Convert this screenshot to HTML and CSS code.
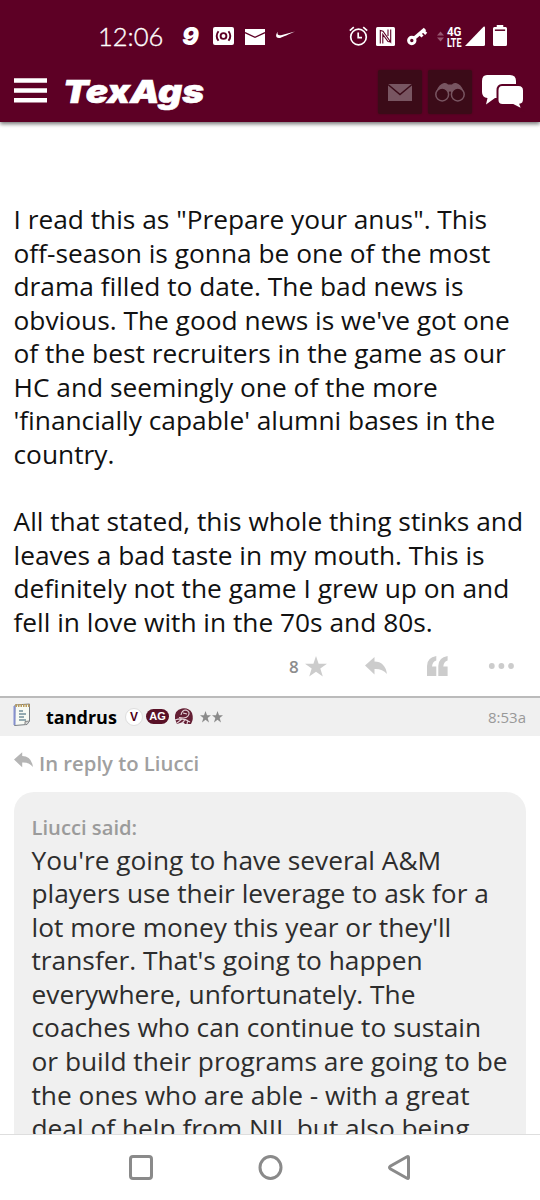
FILE: index.html
```html
<!DOCTYPE html>
<html lang="en">
<head>
<meta charset="utf-8">
<title>TexAgs</title>
<link rel="stylesheet" href="styles.css">
</head>
<body>
<div class="screen">
  <header class="top">
    <div class="status">
      <span class="clock">12:06</span>
      <span class="nine">9</span>
      <svg class="ic-cam" width="21" height="18" viewBox="0 0 21 18"><rect width="21" height="18" rx="2" fill="#fff"/><g fill="none" stroke="#5d0025" stroke-width="1.9"><circle cx="10.500" cy="9" r="2.900"/><path d="M5.500 4.200Q1.900 9 5.500 13.800M15.500 4.200Q19.100 9 15.500 13.800"/></g></svg>
      <svg class="ic-mail" width="20" height="17" viewBox="0 0 20 17"><path d="M0 1H20V17H0Z" fill="#fff"/><path d="M0 4.600L10 9.300L20 4.600" fill="none" stroke="#5d0025" stroke-width="1.400"/></svg>
      <svg class="ic-swoosh" width="20" height="9" viewBox="0 0 20 9"><path d="M1.600 .8C-.6 4-.6 7.400 3.600 7Q5 6.900 19 .5L5 4.200C2.500 4.800 1 3.600 1.600 .8Z" fill="#fff"/></svg>
      <span class="grow"></span>
      <svg class="ic-alarm" width="19" height="20" viewBox="0 0 19 20"><g fill="none" stroke="#fff" stroke-width="1.700"><circle cx="9.500" cy="11" r="7.800"/><path d="M.8 4.600L4.800 1.200M18.200 4.600L14.200 1.200M9.200 6.500V11.700H13"/></g></svg>
      <svg class="ic-nfc" width="19" height="19" viewBox="0 0 19 19"><rect width="19" height="19" rx="1.500" fill="#fff"/><path d="M4.300 16.500V3.500L7 4.200L14.700 15V2.500M14.700 15L12 14.500L6.800 7.500V16.500M12 2.500V9" fill="none" stroke="#5d0025" stroke-width="1.100"/></svg>
      <svg class="ic-key" width="20" height="19" viewBox="0 0 20 19"><g fill="none" stroke="#fff"><circle cx="4.800" cy="13.500" r="3.200" stroke-width="3"/><path d="M7.500 11L18 2" stroke-width="3.600"/><path d="M12.500 6.500L15.500 9.500M15.700 3.500L19.200 6.800" stroke-width="3"/></g></svg>
      <svg class="ic-arrows" width="7" height="11" viewBox="0 0 7 11"><path d="M0 4.500L3.500 .5L7 4.500ZM0 6.500H7L3.500 10.500Z" fill="#965670"/></svg>
      <svg class="lte" width="15" height="21" viewBox="0 0 15 21"><text x="0" y="9.200" textLength="14.500" lengthAdjust="spacingAndGlyphs">4G</text><text x="0" y="20.200" textLength="14.500" lengthAdjust="spacingAndGlyphs">LTE</text></svg>
      <svg class="ic-signal" width="20" height="20" viewBox="0 0 20 20"><path d="M0 20L18.500 .7Q20 0 20 1.500V18.500Q20 20 18.500 20Z" fill="#fff"/></svg>
      <svg class="ic-batt" width="14" height="21" viewBox="0 0 15 21" preserveAspectRatio="none"><path d="M4 0H11V2H13.500Q15 2 15 3.500V19.500Q15 21 13.500 21H1.500Q0 21 0 19.500V3.500Q0 2 1.500 2H4Z" fill="#fff"/><path d="M2 5.200H13" stroke="#5d0025" stroke-width="1.500"/></svg>
    </div>
    <div class="nav">
      <svg class="menu" width="33" height="25" viewBox="0 0 33 25"><path d="M0 2.500H33M0 12.500H33M0 22.300H33" stroke="#fff" stroke-width="4.400"/></svg>
      <svg class="brand" width="144" height="38" viewBox="0 0 144 38"><text x="-1" y="30" textLength="141" lengthAdjust="spacingAndGlyphs">TexAgs</text></svg>
      <span class="grow"></span>
      <span class="tile"><svg width="24" height="17" viewBox="0 0 24 17"><rect width="24" height="17" fill="#785561"/><path d="M0 .5L12 10.500L24 .5" fill="none" stroke="#3b0b18" stroke-width="1.500"/></svg></span>
      <span class="tile"><svg width="30" height="19" viewBox="0 0 30 19"><path d="M1.500 8Q4 1 9 0Q12 -.5 13 1.500H17Q18 -.5 21 0Q26 1 28.500 8L20 14L15 8L10 14Z" fill="#785561"/><g fill="#3b0b18" stroke="#785561" stroke-width="1.500"><circle cx="7.200" cy="11.500" r="6.400"/><circle cx="22.800" cy="11.500" r="6.400"/></g></svg></span>
      <svg class="chat" width="44" height="36" viewBox="0 0 44 36"><path d="M6 1H29Q35 1 35 7V18Q35 24 29 24H14L5 30.500L6.500 24Q1 23.500 1 18V7Q1 1 6 1Z" fill="#fff"/><path d="M21 11H37.500Q43 11 43 16.500V25Q43 30 39.500 30.500L41.500 36L32 31H21.500Q16.500 31 16.500 26V16.500Q16.500 11 21 11Z" fill="#fff" stroke="#5d0025" stroke-width="2"/></svg>
    </div>
  </header>
  <main class="feed">
    <article class="post">I read this as "Prepare your anus". This<br>off-season is gonna be one of the most<br>drama filled to date. The bad news is<br>obvious. The good news is we've got one<br>of the best recruiters in the game as our<br>HC and seemingly one of the more<br>'financially capable' alumni bases in the<br>country.<br><br>All that stated, this whole thing stinks and<br>leaves a bad taste in my mouth. This is<br>definitely not the game I grew up on and<br>fell in love with in the 70s and 80s.</article>
    <div class="actions">
      <span class="count">8</span>
      <svg class="a-star" width="22" height="21" viewBox="0 0 22 21"><path d="M11 0L13.600 7.700H22L15.300 12.500L17.800 20.500L11 15.700L4.200 20.500L6.700 12.500L0 7.700H8.400Z"/></svg>
      <svg class="a-reply" width="22" height="18" viewBox="0 0 22 18"><path d="M0 8.500L9.500 0V4.500Q20 4.500 22 17Q17 11.500 9.500 12V17.500Z"/></svg>
      <svg class="a-quote" width="21" height="20" viewBox="0 0 21 20"><path d="M0 20V10Q0 1.500 9.300 0V4.500Q5.500 5.500 5 10.500H9.300V20Z"/><path transform="translate(11.300)" d="M0 20V10Q0 1.500 9.300 0V4.500Q5.500 5.500 5 10.500H9.300V20Z"/></svg>
      <svg class="a-dots" width="25" height="6" viewBox="0 0 25 6"><circle cx="2.800" cy="3" r="2.900"/><circle cx="12.400" cy="3" r="2.900"/><circle cx="22" cy="3" r="2.900"/></svg>
    </div>
    <div class="userbar">
      <svg class="pad" width="19" height="24" viewBox="0 0 19 24"><path d="M2 2L16.500 1V18L14 21.500L1.500 22.500Z" fill="#f7faf4" stroke="#777d83"/><path d="M1.500 3V22" stroke="#8590cf" stroke-width="2"/><path d="M2.500 2.500H16.500" stroke="#b99b5c" stroke-width="3" stroke-dasharray="1.500 1"/><path d="M6 8H10M6 11H13M6 14H11M6 17H13" stroke="#73909a" stroke-width="1.500"/><path d="M16.500 18L12 18.500V22" fill="#ccc" stroke="#888"/></svg>
      <span class="name">tandrus</span>
      <span class="badge-v">V</span>
      <span class="badge-ag">AG</span>
      <svg class="helmet" width="19" height="17" viewBox="0 0 19 17"><path d="M1 11Q0 2 8 .5Q15-.5 18 5Q20 11 17 16H11L9 14L3 16Z" fill="#641f34"/><g fill="none" stroke="#e5d4da" stroke-width="1.100"><path d="M7 7Q8 2 12 2Q17 4 14 8Q12 11 5 9.500"/><path d="M1 12Q9 9 16 14M3 15L8 11M8 15L11 12M13 16L14 12M9 5L13 6"/></g></svg>
      <svg class="stars" width="23" height="12" viewBox="0 0 23 12"><path d="M5.500 0L7 4.200H11L7.700 6.900L9 11.500L5.500 8.800L2 11.500L3.300 6.900L0 4.200H4ZM17.500 0L19 4.200H23L19.700 6.900L21 11.500L17.500 8.800L14 11.500L15.300 6.900L12 4.200H16Z" fill="#8b8b8b"/></svg>
      <span class="grow"></span>
      <span class="time">8:53a</span>
    </div>
    <div class="inreply">
      <svg width="19" height="16" viewBox="0 0 22 18"><path d="M0 8.500L9.500 0V4.500Q20 4.500 22 17Q17 11.500 9.500 12V17.500Z" fill="#b5b5b5"/></svg>
      <span>In reply to Liucci</span>
    </div>
    <blockquote class="quote">
      <div class="said">Liucci said:</div>
      <div class="said-text">You're going to have several A&amp;M<br>players use their leverage to ask for a<br>lot more money this year or they'll<br>transfer. That's going to happen<br>everywhere, unfortunately. The<br>coaches who can continue to sustain<br>or build their programs are going to be<br>the ones who are able - with a great<br>deal of help from NIL but also being</div>
    </blockquote>
  </main>
  <footer class="sysnav">
    <svg width="24" height="25" viewBox="0 0 24 25"><rect x="1.500" y="1.500" width="21" height="22" rx="2.500"/></svg>
    <svg width="24" height="25" viewBox="0 0 24 25"><ellipse cx="11.500" cy="12.500" rx="10.500" ry="11"/></svg>
    <svg width="22" height="25" viewBox="0 0 22 25"><path d="M20.500 2.500V22.500Q20.500 24 19 23.200L2.200 13.700Q.8 12.500 2.200 11.300L19 1.800Q20.500 1 20.500 2.500Z"/></svg>
  </footer>
</div>
</body>
</html>
```
FILE: styles.css
```css
* { box-sizing: border-box; }
body { margin: 0; background: #fff; font-family: "Open Sans", "Noto Sans", sans-serif; }
svg { display: block; flex: none; overflow: visible; }
.screen { width: 540px; height: 1200px; display: flex; flex-direction: column; overflow: hidden; }
.grow { flex: 1; }

.top { height: 122px; flex: none; background: #5d0025; color: #fff; box-shadow: 0 2px 4px rgba(0,0,0,.55); z-index: 1; }
.status { height: 72px; display: flex; align-items: center; padding: 0 33px 0 98px; }
.clock { font: 300 25.500px/30px Lato, sans-serif; width: 64px; margin-top: -1px; white-space: nowrap; -webkit-text-stroke: .35px #fff; }
.nine { font: italic 900 25px/30px Inter, sans-serif; margin-left: 20px; width: 19px; }
.ic-cam { margin-left: 12px; }
.ic-mail { margin-left: 11px; }
.ic-swoosh { margin: -2px 0 0 11px; }
.ic-nfc { margin-left: 8px; }
.ic-key { margin-left: 12px; }
.ic-arrows { margin-left: 10px; }
.lte { margin: 3px 0 0 3px; }
.lte text { font: 700 12.500px Roboto, sans-serif; fill: #fff; }
.ic-signal { margin-left: 3px; }
.ic-batt { margin: -1px 0 0 8px; }

.nav { height: 44px; display: flex; align-items: center; padding: 0 15px 0 14px; margin-top: -2px; }
.menu { margin-top: -4px; }
.brand { margin-left: 17px; }
.brand text { font: italic 900 32px Inter, sans-serif; fill: #fff; stroke: #fff; stroke-width: .6px; }
.tile { width: 44px; height: 44px; background: #3b0b18; border-radius: 2px; display: flex; align-items: center; justify-content: center; margin-right: 6px; box-shadow: 0 0 2px #3b0b18; }
.chat { margin: -1px 0 0 3px; }

.feed { flex: 1; overflow: hidden; }
.post { padding: 81px 0 0 13.500px; font-size: 26.300px; line-height: 33.580px; color: #111; white-space: nowrap; }
.actions { height: 56px; display: flex; align-items: center; padding: 0 0 3px 289px; fill: #ccc; }
.count { font-size: 17px; font-weight: 600; color: #8d8d8d; width: 10px; }
.a-star { margin-left: 6px; }
.a-reply { margin-left: 38px; }
.a-quote { margin-left: 40px; }
.a-dots { margin-left: 41px; }

.userbar { height: 40px; display: flex; align-items: center; padding: 0 14px 0 13px; background: #f0f0f0; border-top: 2px solid #bbb; }
.pad { margin-top: -4px; }
.name { font-size: 18px; font-weight: 700; color: #000; margin-left: 14px; width: 71px; white-space: nowrap; }
.badge-v { width: 18px; height: 18px; margin-left: 8px; border: 1px solid #ddd; border-radius: 50%; background: #fff; color: #500018; font: 700 12px/16px "Liberation Sans", sans-serif; text-align: center; }
.badge-ag { width: 23px; height: 15px; margin-left: 3px; border-radius: 8px; background: #591127; color: #fff; font: 700 11px/15px "Liberation Sans", sans-serif; text-align: center; }
.helmet { margin-left: 5px; }
.stars { margin-left: 7px; }
.time { font-size: 15px; color: #999; }

.inreply { height: 56px; display: flex; align-items: center; gap: 6px; padding: 0 0 2px 14px; font-size: 20.300px; font-weight: 600; color: #a0a0a0; white-space: nowrap; }
.inreply svg { margin-top: -6px; }
.quote { margin: 0 14px; padding: 21px 0 0 17.500px; background: #f0f0f0; border-radius: 20px 20px 0 0; height: 420px; white-space: nowrap; }
.said { font-size: 20.200px; line-height: 28px; font-weight: 600; color: #9b9b9b; }
.said-text { font-size: 26.300px; line-height: 33.580px; color: #2d2d2d; margin-top: 3px; }

.sysnav { height: 66px; flex: none; background: #fff; border-top: 1px solid #dedede; display: flex; align-items: center; justify-content: space-between; padding: 0 130px 0 129px; fill: none; stroke: #8a8a8a; stroke-width: 3; }
```
